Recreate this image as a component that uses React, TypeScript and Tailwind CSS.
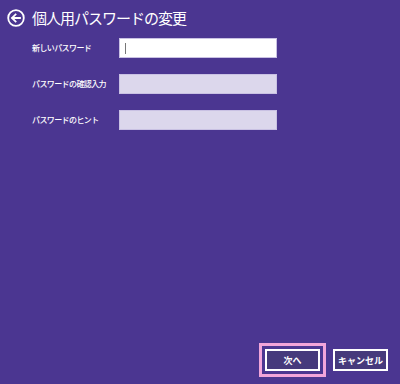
import React from 'react';

const font = '"Noto Sans CJK JP", "Noto Sans", sans-serif';

const BackIcon = () => (
  <svg width="18" height="18" viewBox="0 0 18 18" fill="none">
    <circle cx="9" cy="9" r="7.8" stroke="white" strokeWidth="1.8" />
    <path d="M13 9H5.2M8.6 5.4L5 9l3.6 3.6" stroke="white" strokeWidth="1.8" strokeLinecap="square" />
  </svg>
);

const App = () => {
  const rows = [
    { label: '新しいパスワード', active: true },
    { label: 'パスワードの確認入力', active: false },
    { label: 'パスワードのヒント', active: false },
  ];

  return (
    <div
      className="w-[400px] h-[384px] bg-[#4b3691] flex flex-col text-white overflow-hidden"
      style={{ fontFamily: font }}
    >
      <div className="flex items-center h-[34px] pl-[7px] pt-[1px]">
        <BackIcon />
        <div className="ml-[7px] text-[15px] tracking-[-1px] leading-none">個人用パスワードの変更</div>
      </div>

      <div className="flex flex-col gap-[16px] mt-[4px]">
        {rows.map(row => (
          <div key={row.label} className="flex items-center pl-[32px]">
            <div className="w-[87px] text-[8px] tracking-[-0.6px] font-medium leading-none">{row.label}</div>
            {row.active ? (
              <div className="w-[158px] h-[20px] bg-white border border-[#c9c1e3] flex items-center pl-[5px]">
                <div className="w-[1px] h-[11px] bg-[#777777]"></div>
              </div>
            ) : (
              <div className="w-[158px] h-[20px] bg-[#dcd7ec] border border-[#c9c1e3]"></div>
            )}
          </div>
        ))}
      </div>

      <div className="flex-1"></div>

      <div className="flex justify-end gap-[13px] pr-[12px] pb-[13px]">
        <button className="w-[55px] h-[22px] bg-[#463a7c] border-2 border-white text-[9px] font-bold outline-[3px] outline-solid outline-[#f2a5da] outline-offset-[3px] leading-none">
          次へ
        </button>
        <button className="w-[55px] h-[22px] bg-[#463a7c] border-2 border-white text-[9px] font-bold leading-none">
          キャンセル
        </button>
      </div>
    </div>
  );
};

export default App;
